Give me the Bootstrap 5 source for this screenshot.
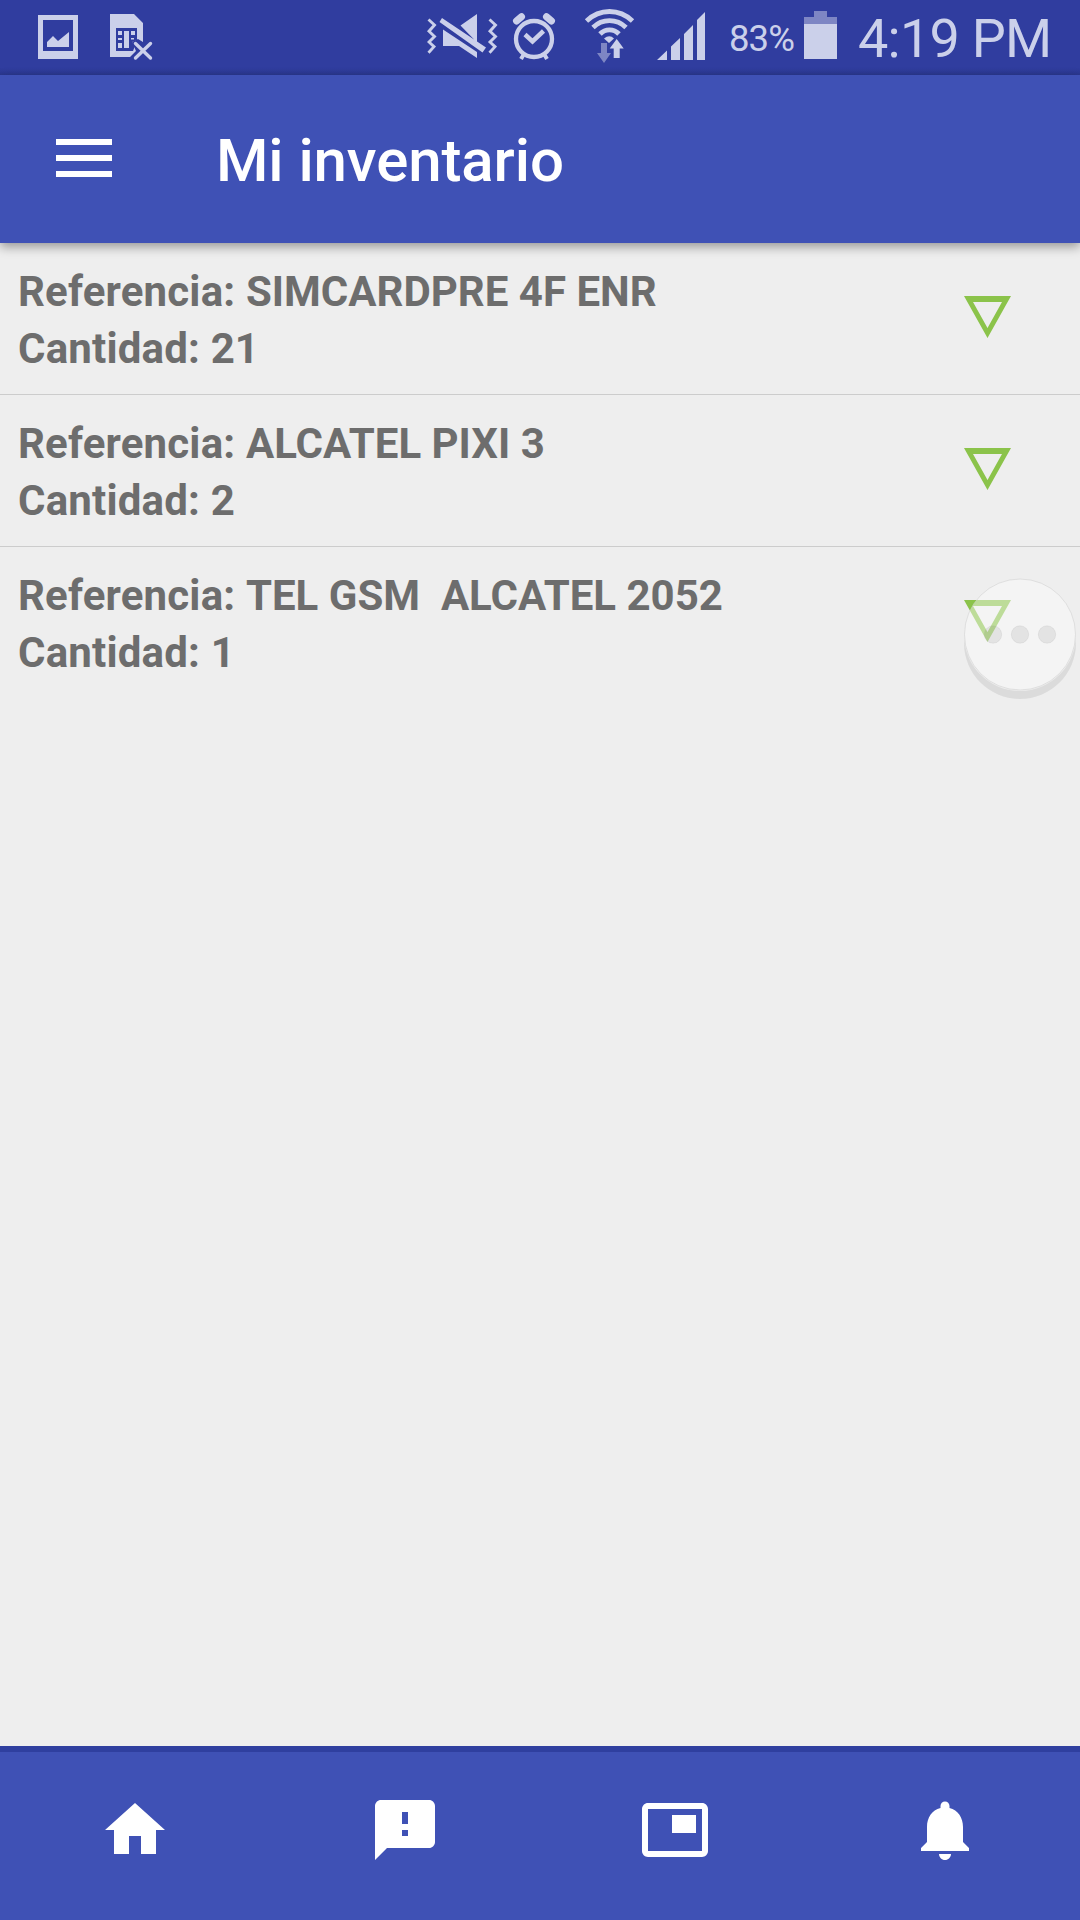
<!DOCTYPE html>
<html lang="es">
<head>
<meta charset="utf-8">
<meta name="viewport" content="width=device-width, initial-scale=1">
<title>Mi inventario</title>
<link href="https://cdn.jsdelivr.net/npm/bootstrap@5.3.0/dist/css/bootstrap.min.css" rel="stylesheet">
<style>
  body { font-family: Roboto, "Liberation Sans", sans-serif; background: #eee; }
  svg { display: block; flex: none; }
  .status-bar { height: 75px; padding-left: 38px; padding-right: 30px; color: #cbd0ea; background: linear-gradient(#303d9f 0 68px, #2b3890 75px); }
  .status-left { gap: 31px; }
  .battery-text { font-size: 36.5px; line-height: 75px; width: 75px; padding-top: 1px; margin-left: -2px; letter-spacing: -.9px; }
  .clock-text { font-size: 54px; line-height: 75px; white-space: nowrap; width: 213px; padding-left: 21px; padding-top: 1px; letter-spacing: -.75px; }
  .app-bar { height: 168px; background: #3f51b5; box-shadow: 0 4px 10px rgba(0,0,0,.36); z-index: 2; padding-left: 56px; }
  .app-title { font-size: 60px; font-weight: 500; line-height: 72px; margin-left: 104px; padding-top: 4px; letter-spacing: -.1px; }
  .menu-btn { padding: 0; margin-top: -2px; border: 0; background: none; }
  .stock-list { --bs-list-group-bg: transparent; --bs-list-group-border-radius: 0; }
  .stock-item { height: 152px; padding: 20px 69px 0 18px; border: 0; border-bottom: 2px solid #ccc; color: #6d6d6d; font-size: 42px; font-weight: 700; line-height: 57px; white-space: pre; }
  .stock-item span { letter-spacing: .18px; }
  .stock-item:last-child { border-color: transparent; }
  .stock-item svg { margin-top: 33px; }
  .assist-dot { right: 0; top: 571px; z-index: 3; }
  .bottom-nav { height: 174px; background: #3f51b5; border-top: 6px solid #2f3f9f; padding-top: 42px; }
</style>
</head>
<body>
<div class="vh-100 d-flex flex-column position-relative overflow-hidden">
  <header class="status-bar d-flex justify-content-between">
    <div class="status-left d-flex">
      <!-- screenshot notice -->
      <svg width="41" height="75" viewBox="38 0 41 75"><path fill="currentColor" fill-rule="evenodd" d="M38 15h40v44H38zM43 20v31h30V20zM47 47v-5l6-6 5 5 11-9v15z"/></svg>
      <!-- missing SIM -->
      <svg width="43" height="75" viewBox="110 0 43 75">
        <path fill="currentColor" d="M110 14h24l9 9v19l-5-3-6 3 4 9-6 6h-20z"/>
        <path fill="#303d9f" d="M116 28h21v12l-5 2 3 4-2 5h-17z"/>
        <path fill="currentColor" d="M118 31h4v4h-4zm0 7h4v2h-4zm0 5h4v5h-4zm6-12h5v17h-5zm7 0h4v4h-4zm0 7h3v1.500h-3z"/>
        <path stroke="currentColor" stroke-width="3.400" stroke-linecap="round" d="M135.500 43.500l15 14.500m0-14.500l-15 14.500"/>
      </svg>
    </div>
    <div class="d-flex">
      <!-- muted, alarm, wifi, signal -->
      <svg width="304" height="75" viewBox="427 0 304 75">
        <g fill="none" stroke="currentColor" stroke-width="2.900"><path d="M428.500 19.500l6 5.500-5.500 6.200 5.500 5.300-5.500 5.500 5 4.700-5.500 6M489.500 19.500l6 5.500-5.500 6.200 5.500 5.300-5.500 5.500 5 4.700-5.500 6"/></g>
        <path fill="currentColor" d="M477 14v28.500l-16.500-17zM443 29.500l34 22.500v6l-18-12h-16zM442 18l44 29.500-3.500 5L439.500 22z"/>
        <g fill="none" stroke="currentColor">
          <circle cx="534" cy="39" r="18" stroke-width="4.300"/>
          <path stroke-width="4.500" d="M525 34.500l7.500 7L543.500 31"/>
          <path stroke-width="4" d="M524 54l-3 5m23-5l3 5"/>
          <path stroke-width="7" stroke-linecap="round" d="M516.500 21l5-4.200M551.500 21l-5-4.200"/>
          <g stroke-width="4.800"><path d="M586.500 21q10-9.500 23-9.500t23 9.500"/><path d="M593 27.500q7-6.800 16.500-6.800t16.500 6.800"/><path d="M600 34q4-4.200 9.500-4.200t9.500 4.200"/></g>
        </g>
        <path fill="currentColor" d="M604 38.500q5.500-4.500 10 0l-5 4.500zM616.700 39l7 9.500h-4V58h-6v-9.500h-4z"/>
        <path fill="currentColor" opacity=".5" d="M601 43h6v10h4l-7 10-7-10h4z"/>
        <path fill="currentColor" d="M657 60l10-9.500V60zM671 46.500l9-8.500v22h-9zM684 34l9-9v35h-9zM697 20l8-8v48h-8z"/>
      </svg>
      <div class="battery-text">83%</div>
      <svg width="33" height="75" viewBox="804 0 33 75"><path fill="currentColor" opacity=".5" d="M814 11h13v6h10v7h-33v-7h10z"/><path fill="currentColor" d="M804 24h33v35h-33z"/></svg>
      <div class="clock-text">4:19 PM</div>
    </div>
  </header>
  <nav class="app-bar d-flex align-items-center text-white position-relative">
    <button class="menu-btn" type="button" aria-label="Menú"><svg width="56" height="38" viewBox="0 0 56 38"><path fill="#fff" d="M0 0h56v6H0zm0 16h56v6H0zm0 16h56v6H0z"/></svg></button>
    <h1 class="app-title mb-0">Mi inventario</h1>
  </nav>
  <main class="flex-grow-1">
    <ul class="list-group list-group-flush stock-list">
      <li class="list-group-item stock-item d-flex justify-content-between align-items-start"><div><div><span>Referencia: </span>SIMCARDPRE 4F ENR</div><div><span>Cantidad: </span>21</div></div><svg width="47" height="42" viewBox="0 0 47 42"><path fill="#8bc34a" fill-rule="evenodd" d="M0 0h47L23.500 42zM9 6l14.500 26L38 6z"/></svg></li>
      <li class="list-group-item stock-item d-flex justify-content-between align-items-start"><div><div><span>Referencia: </span>ALCATEL PIXI 3</div><div><span>Cantidad: </span>2</div></div><svg width="47" height="42" viewBox="0 0 47 42"><path fill="#8bc34a" fill-rule="evenodd" d="M0 0h47L23.500 42zM9 6l14.500 26L38 6z"/></svg></li>
      <li class="list-group-item stock-item d-flex justify-content-between align-items-start"><div><div><span>Referencia: </span>TEL GSM  ALCATEL 2052</div><div><span>Cantidad: </span>1</div></div><svg width="47" height="42" viewBox="0 0 47 42"><path fill="#8bc34a" fill-rule="evenodd" d="M0 0h47L23.500 42zM9 6l14.500 26L38 6z"/></svg></li>
    </ul>
  </main>
  <!-- floating assistant button -->
  <svg class="assist-dot position-absolute" width="120" height="135" viewBox="0 0 120 135">
    <path fill="#000" fill-opacity=".08" d="M4 64a56 56 0 0 0 112 0v8a56 56 0 0 1-112 0z"/>
    <circle cx="60" cy="63.500" r="55.500" fill="#fafafa" fill-opacity=".45" stroke="#ccc" stroke-opacity=".5"/>
    <g fill="#000" fill-opacity=".065" stroke="#999" stroke-opacity=".15"><circle cx="33" cy="63.500" r="8.700"/><circle cx="60" cy="63.500" r="8.700"/><circle cx="87" cy="63.500" r="8.700"/></g>
  </svg>
  <footer class="bottom-nav">
    <div class="row g-0 text-white">
      <div class="col-3 d-flex justify-content-center"><svg width="72" height="72" viewBox="0 0 24 24" fill="currentColor"><path d="M10 20v-6h4v6h5v-8h3L12 3 2 12h3v8z"/></svg></div>
      <div class="col-3 d-flex justify-content-center"><svg width="72" height="72" viewBox="0 0 24 24" fill="currentColor"><path d="M20 2H4c-1.100 0-2 .9-2 2v18l4-4h14c1.100 0 2-.9 2-2V4c0-1.100-.9-2-2-2zm-7 12h-2v-2h2v2zm0-4h-2V6h2v4z"/></svg></div>
      <div class="col-3 d-flex justify-content-center"><svg width="72" height="72" viewBox="0 0 24 24" fill="currentColor"><path d="M19 7h-8v6h8V7zm2-4H3c-1.100 0-2 .9-2 2v14c0 1.100.9 1.980 2 1.980h18c1.100 0 2-.88 2-1.980V5c0-1.100-.9-2-2-2zm0 16.010H3V4.980h18v14.030z"/></svg></div>
      <div class="col-3 d-flex justify-content-center"><svg width="72" height="72" viewBox="0 0 24 24" fill="currentColor"><path d="M12 22c1.100 0 2-.9 2-2h-4c0 1.100.89 2 2 2zm6-6v-5c0-3.070-1.640-5.640-4.500-6.320V4c0-.83-.67-1.500-1.500-1.500s-1.500.67-1.500 1.500v.68C7.630 5.360 6 7.920 6 11v5l-2 2v1h16v-1l-2-2z"/></svg></div>
    </div>
  </footer>
</div>
<script src="https://cdn.jsdelivr.net/npm/bootstrap@5.3.0/dist/js/bootstrap.bundle.min.js"></script>
</body>
</html>
